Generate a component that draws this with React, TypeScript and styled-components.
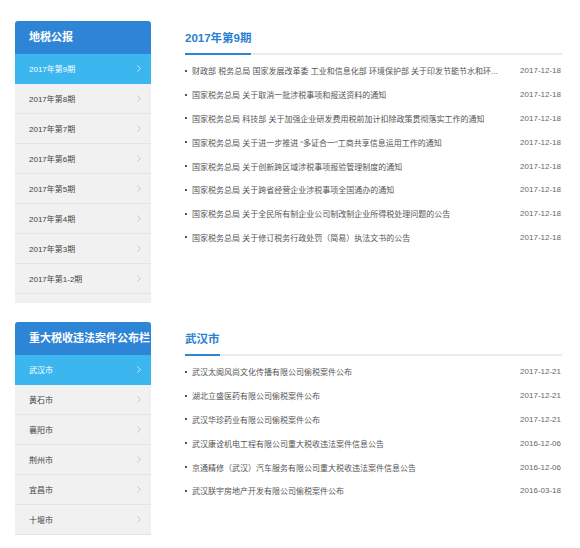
import React from "react";
import styled, { createGlobalStyle } from "styled-components";

const Global = createGlobalStyle`
  html, body { margin: 0; padding: 0; background: #fff; }
  body { font-family: "Liberation Sans", "Noto Sans CJK SC", sans-serif; }
  * { box-sizing: border-box; }
`;

const Page = styled.div`
  padding: 21px 0 0 15px;
  display: flex;
  flex-direction: column;
  gap: 19px;
`;

const Row = styled.section`
  display: flex;
  align-items: flex-start;
  gap: 34px;
`;

const Side = styled.div<{ $padBottom: number }>`
  width: 136px;
  background: #f1f1f1;
  border-radius: 3px 3px 0 0;
  padding-bottom: ${(p) => p.$padBottom}px;
  overflow: hidden;
`;

const SideHead = styled.div`
  height: 33px;
  line-height: 33px;
  padding-left: 14px;
  background: #2e85d6;
  color: #fff;
  font-size: 11px;
  font-weight: bold;
  white-space: nowrap;
  overflow: hidden;
`;

const SideItem = styled.div<{ $active?: boolean }>`
  height: 30px;
  display: flex;
  align-items: center;
  justify-content: space-between;
  padding: 0 10px 0 14px;
  font-size: 8px;
  color: ${(p) => (p.$active ? "#fff" : "#444")};
  background: ${(p) => (p.$active ? "#3cb6ef" : "transparent")};
  border-bottom: 1px solid ${(p) => (p.$active ? "#3cb6ef" : "#e4e4e4")};
`;

const Content = styled.div`
  width: 377px;
`;

const TitleBar = styled.div`
  padding-top: 5px;
  border-bottom: 2px solid #ebebeb;
  height: 34px;
`;

const Title = styled.span`
  display: inline-block;
  line-height: 24px;
  height: 29px;
  font-size: 11.5px;
  font-weight: bold;
  color: #2a7fd3;
  border-bottom: 2px solid #2e85d6;
`;

const List = styled.ul`
  list-style: none;
  margin: 0;
  padding: 4px 0 0 0;
`;

const Item = styled.li`
  display: flex;
  align-items: center;
  justify-content: space-between;
  gap: 12px;
  height: 23.8px;
  padding-right: 1px;
  font-size: 8px;
  color: #555;
`;

const ItemText = styled.span`
  display: flex;
  align-items: center;
  max-width: 318px;
  min-width: 0;
  white-space: nowrap;
  overflow: hidden;
  &::before {
    content: "";
    flex: none;
    width: 2px;
    height: 2px;
    background: #555;
    margin-right: 5px;
  }
`;

const Ellipsis = styled.span`
  overflow: hidden;
  text-overflow: ellipsis;
`;

const Date = styled.span`
  color: #666;
  flex: none;
`;

const Chevron = ({ active }: { active?: boolean }) => (
  <svg width="4" height="7" viewBox="0 0 4 7">
    <polyline
      points="0.5,0.5 3.3,3.5 0.5,6.5"
      fill="none"
      stroke={active ? "#d6eefc" : "#c4c4c4"}
      strokeWidth="0.9"
    />
  </svg>
);

const issues = [
  "2017年第9期",
  "2017年第8期",
  "2017年第7期",
  "2017年第6期",
  "2017年第5期",
  "2017年第4期",
  "2017年第3期",
  "2017年第1-2期",
];

const cities = ["武汉市", "黄石市", "襄阳市", "荆州市", "宜昌市", "十堰市"];

const news = [
  "财政部 税务总局 国家发展改革委 工业和信息化部 环境保护部 关于印发节能节水和环...",
  "国家税务总局 关于取消一批涉税事项和报送资料的通知",
  "国家税务总局 科技部 关于加强企业研发费用税前加计扣除政策贯彻落实工作的通知",
  "国家税务总局 关于进一步推进 “多证合一”工商共享信息运用工作的通知",
  "国家税务总局 关于创新跨区域涉税事项报验管理制度的通知",
  "国家税务总局 关于跨省经营企业涉税事项全国通办的通知",
  "国家税务总局 关于全民所有制企业公司制改制企业所得税处理问题的公告",
  "国家税务总局 关于修订税务行政处罚（简易）执法文书的公告",
];

const cases: [string, string][] = [
  ["武汉太阁风尚文化传播有限公司偷税案件公布", "2017-12-21"],
  ["湖北立盛医药有限公司偷税案件公布", "2017-12-21"],
  ["武汉华珍药业有限公司偷税案件公布", "2017-12-21"],
  ["武汉康诠机电工程有限公司重大税收违法案件信息公告", "2016-12-06"],
  ["京通精修（武汉）汽车服务有限公司重大税收违法案件信息公告", "2016-12-06"],
  ["武汉朕宇房地产开发有限公司偷税案件公布", "2016-03-18"],
];

export default function App() {
  return (
    <>
      <Global />
      <Page>
        <Row>
          <Side $padBottom={9}>
            <SideHead>地税公报</SideHead>
            {issues.map((t, i) => (
              <SideItem key={t} $active={i === 0}>
                <span>{t}</span>
                <Chevron active={i === 0} />
              </SideItem>
            ))}
          </Side>
          <Content>
            <TitleBar>
              <Title>2017年第9期</Title>
            </TitleBar>
            <List>
              {news.map((t) => (
                <Item key={t}>
                  <ItemText>
                    <Ellipsis>{t}</Ellipsis>
                  </ItemText>
                  <Date>2017-12-18</Date>
                </Item>
              ))}
            </List>
          </Content>
        </Row>
        <Row>
          <Side $padBottom={0}>
            <SideHead>重大税收违法案件公布栏</SideHead>
            {cities.map((t, i) => (
              <SideItem key={t} $active={i === 0}>
                <span>{t}</span>
                <Chevron active={i === 0} />
              </SideItem>
            ))}
          </Side>
          <Content>
            <TitleBar>
              <Title>武汉市</Title>
            </TitleBar>
            <List>
              {cases.map(([t, d]) => (
                <Item key={t}>
                  <ItemText>
                    <Ellipsis>{t}</Ellipsis>
                  </ItemText>
                  <Date>{d}</Date>
                </Item>
              ))}
            </List>
          </Content>
        </Row>
      </Page>
    </>
  );
}
